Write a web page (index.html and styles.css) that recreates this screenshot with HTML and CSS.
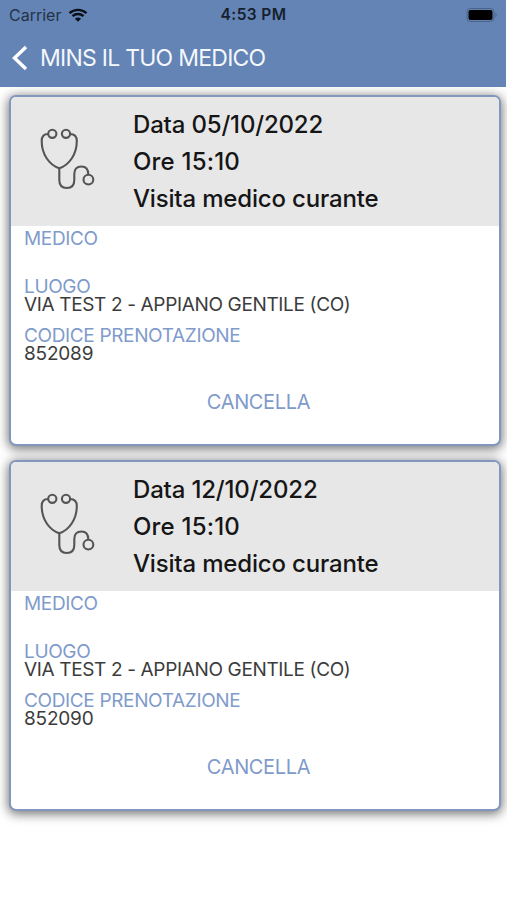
FILE: index.html
```html
<!DOCTYPE html>
<html lang="it">
<head>
  <meta charset="UTF-8">
  <meta name="viewport" content="width=device-width, initial-scale=1.0">
  <title>Mins il tuo medico</title>
  <link rel="stylesheet" href="styles.css">
</head>
<body>
  <svg width="0" height="0" class="icon-defs">
    <symbol id="stethoscope" viewBox="0 0 75 75">
      <circle cx="22.3" cy="13.8" r="4.1"/>
      <circle cx="36" cy="13.8" r="4.1"/>
      <path d="M18.2 14C13.5 14 11.7 17 11.7 21C11.7 34 19 45 29.3 48.3C39.5 45 46.8 34 46.8 21C46.8 17 45 14 40.1 14"/>
      <path d="M29.3 48.3V60C29.3 65.5 32 68 36.8 68C41.5 68 44.3 65.5 44.3 60V54C44.3 48.5 47 46.5 51.5 46.5C56 46.5 58.3 49 58.3 54.5"/>
      <circle cx="58.4" cy="59.6" r="4.9"/>
    </symbol>
  </svg>

  <header class="header">
    <div class="status-bar">
      <div class="carrier">
        <span>Carrier</span>
        <svg class="wifi" viewBox="0 0 20 14">
          <path d="M1.5 5.2C6.3 0.7 13.7 0.7 18.5 5.2"/>
          <path d="M4.5 8.2C7.7 5.3 12.3 5.3 15.5 8.2"/>
          <path class="wifi-dot" d="M10 13.8L6.9 10.7C8.7 9.1 11.3 9.1 13.1 10.7Z"/>
        </svg>
      </div>
      <div class="time">4:53 PM</div>
      <div class="battery">
        <svg viewBox="0 0 32 14">
          <rect class="battery-frame" x="1" y="0.5" width="27" height="13" rx="3.5"/>
          <rect x="2.5" y="2" width="24" height="10" rx="2"/>
          <path class="battery-tip" d="M29.5 5C31 5.5 31 8.5 29.5 9Z"/>
        </svg>
      </div>
    </div>
    <div class="nav-bar">
      <svg class="back" viewBox="0 0 16 26"><path d="M14 2L2.5 13L14 24"/></svg>
      <h1 class="title">MINS IL TUO MEDICO</h1>
    </div>
  </header>

  <main class="list">
    <section class="card">
      <div class="card-head">
        <svg class="card-icon"><use href="#stethoscope"/></svg>
        <div class="card-info">
          <p class="date">Data 05/10/2022</p>
          <p class="hour">Ore 15:10</p>
          <p class="visit">Visita medico curante</p>
        </div>
      </div>
      <div class="card-body">
        <div class="label">MEDICO</div>
        <div class="value"></div>
        <div class="label">LUOGO</div>
        <div class="value">VIA TEST 2 - APPIANO GENTILE (CO)</div>
        <div class="label">CODICE PRENOTAZIONE</div>
        <div class="value code">852089</div>
      </div>
      <button class="cancel">CANCELLA</button>
    </section>

    <section class="card">
      <div class="card-head">
        <svg class="card-icon"><use href="#stethoscope"/></svg>
        <div class="card-info">
          <p class="date">Data 12/10/2022</p>
          <p class="hour">Ore 15:10</p>
          <p class="visit">Visita medico curante</p>
        </div>
      </div>
      <div class="card-body">
        <div class="label">MEDICO</div>
        <div class="value"></div>
        <div class="label">LUOGO</div>
        <div class="value">VIA TEST 2 - APPIANO GENTILE (CO)</div>
        <div class="label">CODICE PRENOTAZIONE</div>
        <div class="value code">852090</div>
      </div>
      <button class="cancel">CANCELLA</button>
    </section>
  </main>
</body>
</html>
```

FILE: styles.css
```css
* {
  margin: 0;
  padding: 0;
  box-sizing: border-box;
  font-family: Inter, 'Liberation Sans', sans-serif;
}

body {
  background-color: #fff;
  height: 900px;
  overflow: hidden;
}

.icon-defs {
  display: block;
}

.header {
  height: 87px;
  margin-right: 1px;
  background-color: #6384b5;
}

.status-bar {
  display: grid;
  grid-template-columns: 1fr auto 1fr;
  align-items: center;
  height: 29px;
  padding: 0 8px 0 9px;
  font-size: 16px;
  color: #263347;
}

.carrier {
  display: flex;
  align-items: center;
  gap: 7px;
}

.wifi {
  width: 20px;
  height: 14px;
  fill: none;
  stroke: #0b1018;
  stroke-width: 2.4;
}

.wifi-dot {
  fill: #0b1018;
  stroke: none;
}

.time {
  font-weight: 600;
  font-size: 15.5px;
  letter-spacing: 0.4px;
  color: #17202e;
}

.battery {
  display: flex;
  justify-content: flex-end;
}

.battery svg {
  width: 32px;
  height: 14px;
  fill: #000;
}

.battery .battery-frame {
  fill: none;
  stroke: #4b6288;
}

.battery .battery-tip {
  fill: #4b6288;
}

.nav-bar {
  display: flex;
  align-items: center;
  height: 57px;
  padding-left: 12px;
}

.back {
  width: 16px;
  height: 26px;
  fill: none;
  stroke: #fff;
  stroke-width: 3.4;
}

.title {
  margin-left: 12px;
  font-size: 23px;
  font-weight: 400;
  letter-spacing: -0.75px;
  color: #f4f7fc;
}

.list {
  display: flex;
  flex-direction: column;
  gap: 14px;
  padding: 8px 6px 0 9px;
  overflow: hidden;
  height: 813px;
}

.card {
  flex: none;
  height: 351px;
  border: 2px solid #8297bd;
  border-radius: 7px;
  background-color: #fff;
  box-shadow: 0 2px 11px 1px rgba(0, 0, 0, 0.55);
  overflow: hidden;
}

.card-head {
  display: flex;
  height: 129px;
  padding-top: 9px;
  background-color: #e7e7e7;
}

.card-icon {
  width: 75px;
  height: 75px;
  margin: 14px 0 0 19px;
  fill: none;
  stroke: #555;
  stroke-width: 2.1;
}

.card-info {
  margin-left: 28px;
  font-size: 24px;
  font-weight: 500;
  line-height: 37px;
  letter-spacing: -0.17px;
  color: #161616;
}

.hour {
  letter-spacing: 0.2px;
}

.card-body {
  padding: 4px 13px 0;
  font-size: 19px;
  line-height: 18px;
  letter-spacing: -0.35px;
}

.label {
  color: #7f9bcb;
}

.value {
  height: 18px;
  margin-bottom: 13px;
  color: #3c3c3c;
}

.label + .value:empty {
  margin-bottom: 12px;
}

.code {
  letter-spacing: -0.2px;
}

.cancel {
  display: block;
  width: 100%;
  padding-left: 7px;
  margin-top: 27px;
  border: none;
  background: none;
  font-size: 20px;
  line-height: 24px;
  letter-spacing: -0.35px;
  color: #7f9bcb;
}
```
